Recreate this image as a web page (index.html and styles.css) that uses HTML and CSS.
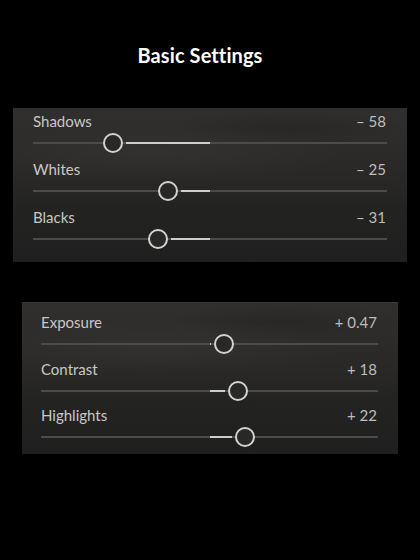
FILE: index.html
```html
<!DOCTYPE html>
<html>
<head>
<meta charset="utf-8">
<link rel="stylesheet" href="styles.css">
</head>
<body>
<h1 class="title">Basic Settings</h1>

<section class="panel panel-one">
  <div class="row">
    <div class="label-row"><span class="label">Shadows</span><span class="value">– 58</span></div>
    <div class="slider">
      <div class="fill" style="left: calc(22.6% + 13px); right: 50%;"></div>
      <div class="thumb" style="left: calc(22.6% - 10px);"></div>
    </div>
  </div>
  <div class="row">
    <div class="label-row"><span class="label">Whites</span><span class="value">– 25</span></div>
    <div class="slider">
      <div class="fill" style="left: calc(38.2% + 13px); right: 50%;"></div>
      <div class="thumb" style="left: calc(38.2% - 10px);"></div>
    </div>
  </div>
  <div class="row">
    <div class="label-row"><span class="label">Blacks</span><span class="value">– 31</span></div>
    <div class="slider">
      <div class="fill" style="left: calc(35.3% + 13px); right: 50%;"></div>
      <div class="thumb" style="left: calc(35.3% - 10px);"></div>
    </div>
  </div>
</section>

<section class="panel panel-two">
  <div class="row">
    <div class="label-row"><span class="label">Exposure</span><span class="value">+ 0.47</span></div>
    <div class="slider">
      <div class="fill" style="left: 50%; right: calc(100% - 54.3% + 13px);"></div>
      <div class="thumb" style="left: calc(54.3% - 10px);"></div>
    </div>
  </div>
  <div class="row">
    <div class="label-row"><span class="label">Contrast</span><span class="value">+ 18</span></div>
    <div class="slider">
      <div class="fill" style="left: 50%; right: calc(100% - 58.5% + 13px);"></div>
      <div class="thumb" style="left: calc(58.5% - 10px);"></div>
    </div>
  </div>
  <div class="row">
    <div class="label-row"><span class="label">Highlights</span><span class="value">+ 22</span></div>
    <div class="slider">
      <div class="fill" style="left: 50%; right: calc(100% - 60.6% + 13px);"></div>
      <div class="thumb" style="left: calc(60.6% - 10px);"></div>
    </div>
  </div>
</section>
</body>
</html>
```

FILE: styles.css
```css
html, body {
  margin: 0;
  padding: 0;
  background: #000;
}

body {
  width: 420px;
  height: 560px;
  overflow: hidden;
  font-family: "Lato", "Open Sans", sans-serif;
}

.title {
  margin: 0;
  padding: 43px 20px 0 0;
  height: 24px;
  line-height: 24px;
  text-align: center;
  font-family: "Lato", "Open Sans", sans-serif;
  font-weight: 700;
  font-size: 20px;
  color: #fff;
  letter-spacing: 0.1px;
}

.panel {
  background:
    radial-gradient(ellipse 120px 18px at 70% 12%, rgba(0,0,0,0.12), transparent),
    radial-gradient(ellipse 200px 30px at 35% 30%, rgba(255,255,255,0.03), transparent),
    linear-gradient(180deg, #302f2d 0%, #2a2927 40%, #232322 65%, #1f1f1f 100%);
  box-sizing: border-box;
  display: flex;
  flex-direction: column;
}

.panel-one {
  margin: 41px 0 0 13px;
  width: 394px;
  height: 154px;
  padding: 4px 20px 10px 20px;
  gap: 4px;
}

.panel-two {
  margin: 40px 0 0 22px;
  width: 376px;
  height: 152px;
  padding: 10px 20px 5px 19px;
  gap: 2.5px;
  border-top: 1px solid #3a3936;
}

.row {
  display: flex;
  flex-direction: column;
}

.label-row {
  display: flex;
  justify-content: space-between;
  align-items: baseline;
  height: 18px;
  line-height: 18px;
  font-size: 15px;
}

.label {
  color: #c8c8c6;
}

.value {
  color: #bdbdbb;
  padding-right: 1px;
}

.slider {
  position: relative;
  height: 26px;
  background: linear-gradient(180deg, transparent 12px, #4c4b48 12px, #4c4b48 14px, transparent 14px);
}

.fill {
  position: absolute;
  top: 12px;
  height: 2px;
  background: #cdcdcb;
}

.thumb {
  position: absolute;
  top: 3px;
  width: 20px;
  height: 20px;
  box-sizing: border-box;
  border: 2px solid #d2d2d0;
  border-radius: 50%;
  background: #282826;
}
```
